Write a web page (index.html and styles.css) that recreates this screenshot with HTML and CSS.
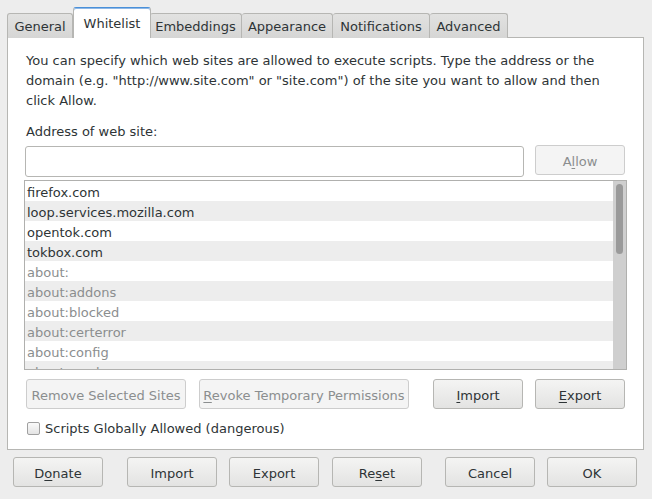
FILE: index.html
```html
<!DOCTYPE html>
<html>
<head>
<meta charset="utf-8">
<link rel="stylesheet" href="styles.css">
</head>
<body>
<div class="dialog">
  <div class="tabs">
    <div class="tab t-general">General</div>
    <div class="tab active t-whitelist">Whitelist</div>
    <div class="tab t-embed">Embeddings</div>
    <div class="tab t-appear">Appearance</div>
    <div class="tab t-notif">Notifications</div>
    <div class="tab t-adv">Advanced</div>
  </div>
  <div class="panel">
    <p class="desc">You can specify which web sites are allowed to execute scripts. Type the address or the domain (e.g. "http://www.site.com" or "site.com") of the site you want to allow and then click Allow.</p>
    <div class="label">Address of web site:</div>
    <div class="addrow">
      <div class="input"></div>
      <div class="btn disabled allow">A<u>l</u>low</div>
    </div>
    <div class="list">
      <div class="rows">
        <div class="row">firefox.com</div>
        <div class="row alt">loop.services.mozilla.com</div>
        <div class="row">opentok.com</div>
        <div class="row alt">tokbox.com</div>
        <div class="row dim">about:</div>
        <div class="row alt dim">about:addons</div>
        <div class="row dim">about:blocked</div>
        <div class="row alt dim">about:certerror</div>
        <div class="row dim">about:config</div>
        <div class="row alt dim">about:crashes</div>
      </div>
      <div class="scrollbar"><div class="thumb"></div></div>
    </div>
    <div class="actions">
      <div class="btn disabled remove">Remove Selected Sites</div>
      <div class="btn disabled revoke"><u>R</u>evoke Temporary Permissions</div>
      <div class="spacer"></div>
      <div class="btn import"><u>I</u>mport</div>
      <div class="btn export"><u>E</u>xport</div>
    </div>
    <label class="check"><span class="box"></span>Scripts Globally Allowed (dangerous)</label>
  </div>
  <div class="footer">
    <div class="btn">D<u>o</u>nate</div>
    <div class="btn">Import</div>
    <div class="btn">Export</div>
    <div class="btn">Re<u>s</u>et</div>
    <div class="btn">Cancel</div>
    <div class="btn">OK</div>
  </div>
</div>
</body>
</html>
```
FILE: styles.css
```css
html, body {
  margin: 0;
  padding: 0;
  background: #ededed;
}
body {
  font-family: "DejaVu Sans", sans-serif;
  font-size: 13px;
  color: #2e3436;
  width: 652px;
  height: 499px;
  overflow: hidden;
}
u {
  text-decoration: underline;
  text-underline-offset: 2px;
}
.dialog {
  padding: 8px 0 0 7px;
}
.tabs {
  display: flex;
  align-items: flex-end;
  height: 30px;
}
.tab {
  box-sizing: border-box;
  height: 25px;
  padding-top: 1px;
  line-height: 24px;
  text-align: center;
  border: 1px solid #b6b6b3;
  border-bottom: none;
  border-left: none;
  border-radius: 3px 3px 0 0;
  background: linear-gradient(#e2e2e1, #d6d6d5);
  color: #2e3436;
  white-space: nowrap;
}
.t-general { width: 66px; border-left: 1px solid #b6b6b3; }
.t-whitelist { width: 78px; }
.t-embed { width: 92px; }
.t-appear { width: 91px; }
.t-notif { width: 97px; }
.t-adv { width: 78px; }
.tab.active {
  height: 31px;
  padding-top: 2px;
  line-height: 27px;
  background: #ffffff;
  border-top: 1px solid #4a90d9;
  border-left: 1px solid #b6b6b3;
  border-right: 1px solid #b6b6b3;
  margin-right: -1px;
  position: relative;
  z-index: 1;
  box-shadow: inset 0 1px 0 #8fb8e6;
}
.panel {
  width: 618px;
  height: 398px;
  background: #ffffff;
  border: 1px solid #b6b6b3;
  margin-top: -1px;
  padding: 13px 0 0 17px;
  display: flex;
  flex-direction: column;
}
.desc {
  margin: 0;
  line-height: 20px;
  width: 600px;
  padding-left: 1px;
}
.label {
  margin-top: 11px;
  line-height: 20px;
  padding-left: 1px;
}
.addrow {
  display: flex;
  margin-top: 3px;
  width: 600px;
  gap: 11px;
}
.input {
  width: 497px;
  height: 29px;
  border: 1px solid #b6b6b3;
  border-radius: 3px;
  background: #fff;
  margin-top: 1px;
}
.btn {
  width: 88px;
  height: 26px;
  padding-top: 2px;
  line-height: 28px;
  text-align: center;
  border: 1px solid #b6b6b3;
  border-radius: 3px;
  background: linear-gradient(#f4f4f3, #e3e3e2);
  color: #2e3436;
  white-space: nowrap;
  box-sizing: content-box;
}
.btn.disabled {
  background: #f4f4f4;
  border-color: #cdcdcd;
  color: #8b8e8f;
}
.list {
  margin-top: 3px;
  margin-left: -1px;
  width: 601px;
  height: 188px;
  border: 1px solid #b0b0ae;
  display: flex;
  overflow: hidden;
  flex-shrink: 0;
}
.rows {
  flex: 1;
}
.row {
  height: 18px;
  padding-top: 2px;
  line-height: 19px;
  padding-left: 2px;
  white-space: nowrap;
}
.row.alt { background: #ededed; }
.row.dim { color: #8b8e8f; }
.scrollbar {
  width: 13px;
  background: #cfcfcf;
}
.thumb {
  margin: 3px 0 0 3px;
  width: 7px;
  height: 70px;
  border-radius: 4px;
  background: #9a9a9a;
}
.actions {
  display: flex;
  margin-top: 9px;
  width: 599px;
  padding-left: 1px;
}
.actions .remove { width: 158px; }
.actions .revoke { width: 208px; margin-left: 13px; }
.spacer { flex: 1; }
.actions .export { margin-left: 12px; }
.check {
  display: flex;
  align-items: center;
  margin-top: 9px;
  height: 20px;
  padding-left: 2px;
}
.box {
  width: 11px;
  height: 11px;
  border: 1px solid #a0a0a0;
  border-radius: 2px;
  background: linear-gradient(#fafafa, #e4e4e4);
  margin-right: 5px;
}
.footer {
  display: flex;
  margin-top: 7px;
  padding-left: 6px;
  width: 625px;
}
.footer .btn:nth-child(2) { margin-left: 24px; }
.footer .btn:nth-child(3) { margin-left: 12px; }
.footer .btn:nth-child(4) { margin-left: 13px; }
.footer .btn:nth-child(5) { margin-left: 23px; }
.footer .btn:nth-child(6) { margin-left: 12px; }
```
